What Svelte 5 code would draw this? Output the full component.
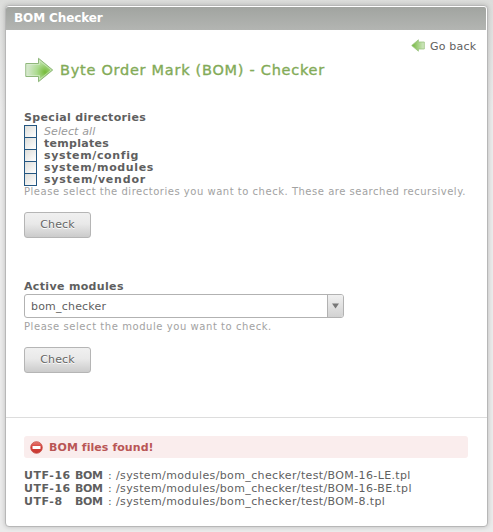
<script>
  const dirs = [
    { name: 'templates', ls: 0.28 },
    { name: 'system/config', ls: 0.64 },
    { name: 'system/modules', ls: 0.65 },
    { name: 'system/vendor', ls: 0.78 }
  ];
  const results = [
    { type: 'UTF-16', path: '/system/modules/bom_checker/test/BOM-16-LE.tpl' },
    { type: 'UTF-16', path: '/system/modules/bom_checker/test/BOM-16-BE.tpl' },
    { type: 'UTF-8', path: '/system/modules/bom_checker/test/BOM-8.tpl' }
  ];
</script>

<main>
  <section class="panel">
    <header>BOM Checker</header>
    <a class="back" href="#back">
      <svg width="14" height="13" viewBox="0 0 14 13">
        <defs><linearGradient id="gb"><stop offset="0" stop-color="#72b63c" /><stop offset=".45" stop-color="#9fce7b" /><stop offset="1" stop-color="#d3e9c6" /></linearGradient></defs>
        <path d="M.7 6.5 7.4.8v2.2h5.9v7H7.4v2.2z" fill="url(#gb)" stroke="#9cc480" stroke-width=".8" />
      </svg>
      <span>Go back</span>
    </a>
    <h1>
      <svg width="30" height="26" viewBox="0 0 30 26">
        <defs><radialGradient id="ga" gradientUnits="userSpaceOnUse" cx="21" cy="15" r="17"><stop offset="0" stop-color="#76bb3a" /><stop offset=".5" stop-color="#addb91" /><stop offset="1" stop-color="#d2e6c8" /></radialGradient></defs>
        <path d="M1.8 6.5h12.7V1.3L28.7 13 14.5 24.7v-5.2H1.8z" fill="url(#ga)" stroke="#8fb77b" />
        <path d="M2.8 18.5v-11h12.7V3.6L27.2 13 15.5 22.4v-3.9z" fill="none" stroke="#e0f1d7" stroke-width=".8" opacity=".65" />
      </svg>
      <span>Byte Order Mark (BOM) - Checker</span>
    </h1>

    <form>
      <h2 class="l1">Special directories</h2>
      <label class="row all"><i class="box"></i><span>Select all</span></label>
      {#each dirs as d}
        <label class="row"><i class="box"></i><span style="letter-spacing:{d.ls}px">{d.name}</span></label>
      {/each}
      <p class="help first">Please select the directories you want to check. These are searched recursively.</p>
      <button type="button">Check</button>

      <h2 class="l2">Active modules</h2>
      <div class="select">
        <span>bom_checker</span>
        <i><svg width="7" height="6" viewBox="0 0 7 6"><path d="M0 .5h7L3.5 5.5z" fill="#777" /></svg></i>
      </div>
      <p class="help second">Please select the module you want to check.</p>
      <button type="button">Check</button>
    </form>

    <div class="results">
      <div class="error">
        <svg width="13" height="13" viewBox="0 0 13 13">
          <defs><linearGradient id="ge" x2="0" y2="1"><stop offset="0" stop-color="#e88078" /><stop offset=".5" stop-color="#d33a34" /><stop offset="1" stop-color="#c83c35" /></linearGradient></defs>
          <circle cx="6.5" cy="6.5" r="5.8" fill="url(#ge)" stroke="#c5473f" stroke-width=".8" />
          <rect x="2.5" y="5" width="8" height="3" rx=".5" fill="#fff" />
        </svg>
        <span>BOM files found!</span>
      </div>
      {#each results as r}
        <div class="result"><b class="type">{r.type}</b><b class="bom">BOM</b><span class="colon">:</span><span class="path">{r.path}</span></div>
      {/each}
    </div>
  </section>
</main>

<style>
  :global(body) { margin: 0; background: #e9e9e9; }
  main {
    box-sizing: border-box; width: 493px; height: 532px; padding: 5px; overflow: hidden;
    background: linear-gradient(#dcdddb, #ebebeb 110px, #ebebeb);
    font: 11px/12px "DejaVu Sans", sans-serif; color: #5f5f5f;
  }
  .panel {
    box-sizing: border-box; width: 483px; height: 522px; border: 1px solid #b7b7b7; border-radius: 4px;
    background: #fff; box-shadow: 0 0 5px rgba(0,0,0,.2); white-space: nowrap;
    display: flex; flex-direction: column;
  }
  header {
    margin: 1px 1px 0 0; height: 23px; padding-left: 8px; border-radius: 2px 2px 0 0;
    background: linear-gradient(#a1a4a0, #b3b5b2); color: #fff; font-weight: bold;
    font-size: 12px; line-height: 22px; letter-spacing: -.1px;
  }
  .back { align-self: flex-end; margin: 9px 9px 0 0; height: 13px; display: flex; gap: 5px; color: #5f5f5f; text-decoration: none; line-height: 15px; }
  .back span { width: 48px; letter-spacing: .2px; }
  h1 { margin: 5px 0 0 18px; height: 26px; display: flex; gap: 6px; align-items: center; font-size: 14.5px; line-height: 24px; font-weight: normal; color: #83ab58; -webkit-text-stroke: .35px #83ab58; }
  h1 span { letter-spacing: .73px; }
  form { padding-left: 18px; height: 334px; }
  h2 { margin: 0; font-size: 11px; line-height: 13px; letter-spacing: .34px; }
  .l1 { padding-top: 28px; height: 14px; }
  .row { display: flex; height: 12px; line-height: 14px; font-weight: bold; }
  .row.all { font-weight: normal; font-style: italic; color: #999; letter-spacing: .1px; }
  .box { box-sizing: border-box; flex: none; width: 13px; height: 13px; border: 1px solid #245681; background: linear-gradient(135deg, #ddddd9, #fff); margin-right: 7px; }
  .help { margin: 0; font-size: 10px; color: #a2a2a2; }
  .help.first { margin-bottom: 15px; height: 12px; line-height: 14px; letter-spacing: .52px; }
  button {
    display: block; box-sizing: border-box; width: 67px; height: 26px; padding: 0; border: 1px solid #b5b5b5; border-radius: 3px;
    background: linear-gradient(#f0f0f0, #e9e9e9 45%, #cbcbcb); font: 11px/24px "DejaVu Sans", sans-serif; letter-spacing: .1px; color: #666; text-shadow: 0 1px #fff;
  }
  .l2 { margin-top: 42px; height: 14px; }
  .select { box-sizing: border-box; width: 320px; height: 24px; border: 1px solid #b2b2b2; border-radius: 3px; display: flex; line-height: 23px; letter-spacing: .2px; }
  .select span { flex: 1; padding-left: 6px; }
  .select i { width: 15px; border-left: 1px solid #b2b2b2; background: linear-gradient(#f0f0f0, #d2d2d2); display: flex; align-items: center; justify-content: center; border-radius: 0 2px 2px 0; }
  .help.second { margin: 3px 0 14px; height: 12px; letter-spacing: .56px; }
  .results { border-top: 1px solid #ddd; padding: 18px 0 0 18px; }
  .error { width: 444px; height: 22px; box-sizing: border-box; padding-left: 6px; display: flex; align-items: center; gap: 6px; border-radius: 3px; background: #faeded; color: #b95655; font-weight: bold; letter-spacing: .07px; line-height: 13px; margin-bottom: 11px; }
  .result { display: flex; height: 13px; line-height: 13px; }
  .type { width: 51px; letter-spacing: .55px; }
  .bom { width: 33px; letter-spacing: -.4px; }
  .colon { width: 8px; }
  .path { letter-spacing: .37px; }
</style>
